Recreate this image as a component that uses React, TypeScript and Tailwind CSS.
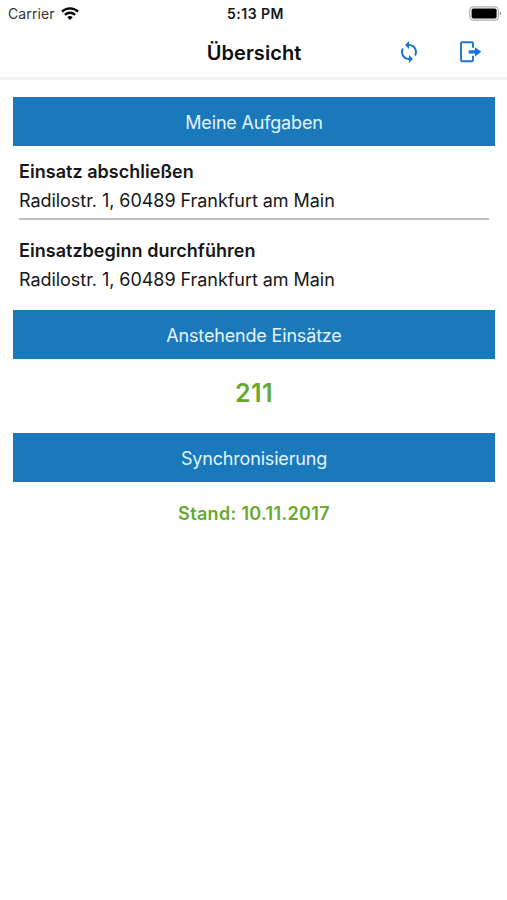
import React from 'react';
import { MdSync } from 'react-icons/md';

const tasks = [
    {
        title: "Einsatz abschließen",
        address: "Radilostr. 1, 60489 Frankfurt am Main"
    },
    {
        title: "Einsatzbeginn durchführen",
        address: "Radilostr. 1, 60489 Frankfurt am Main"
    }
];

function WifiIcon() {
    return (
        <svg width="18" height="13" viewBox="0 0 18 13" fill="none" stroke="#050505" strokeWidth="2.4">
            <path d="M1 4.7a11.4 11.4 0 0 1 16 0" />
            <path d="M3.9 7.9a7.3 7.3 0 0 1 10.2 0" />
            <path d="M9 12.9 6.3 10.2a3.9 3.9 0 0 1 5.4 0z" fill="#050505" stroke="none" />
        </svg>
    );
}

function BatteryIcon() {
    return (
        <svg width="33" height="15" viewBox="0 0 33 15">
            <rect x="0.8" y="0.8" width="28.6" height="13.4" rx="3.6" fill="#fff" stroke="#b0b0b0" strokeWidth="1.2" />
            <rect x="2.6" y="2.6" width="25" height="9.8" rx="1.6" fill="#000" />
            <path d="M30.9 5.4a2.3 2.3 0 0 1 0 4.2z" fill="#999" />
        </svg>
    );
}

function LogoutIcon() {
    return (
        <svg width="22" height="22" viewBox="0 0 22 22" fill="none">
            <path d="M13 6.8V2.6q0-1.4-1.4-1.4H2.4Q1 1.2 1 2.6v16.3q0 1.4 1.4 1.4h9.2q1.4 0 1.4-1.4v-4.2" stroke="#1c74d2" strokeWidth="1.9" />
            <path d="M8.7 9.2h6.2V6.2l6.5 4.6-6.5 4.6v-3H8.7z" fill="#1773e2" />
        </svg>
    );
}

function SectionBar({ children }: { children: React.ReactNode }) {
    return (
        <h2 className="h-[49px] pt-0.5 flex items-center justify-center bg-[#1a79bb] text-[#e4f4fe] text-[18px] leading-none tracking-[-0.17px]">
            {children}
        </h2>
    );
}

export default function App() {
    return (
        <div className="min-h-screen bg-white text-[#171717] font-['Inter',sans-serif]">
            <div className="h-[26px] grid grid-cols-[1fr_auto_1fr] items-center pl-2 pr-[5px] text-[14px]">
                <div className="flex items-center gap-1.5">
                    <span className="text-[#333] tracking-[0.1px]">Carrier</span>
                    <WifiIcon />
                </div>
                <span className="text-center font-semibold tracking-[0.5px] pl-px">5:13 PM</span>
                <div className="flex justify-end">
                    <BatteryIcon />
                </div>
            </div>

            <header className="h-[54px] grid grid-cols-[1fr_auto_1fr] items-center border-b-[3px] border-[#f2f2f2]">
                <h1 className="col-start-2 pt-0.5 pl-px text-[20px] font-semibold tracking-[0.05px] text-[#0c0c0c]">Übersicht</h1>
                <div className="flex items-center justify-end gap-[39px] pr-[25px]">
                    <button>
                        <MdSync size={24} color="#1c74d2" />
                    </button>
                    <button>
                        <LogoutIcon />
                    </button>
                </div>
            </header>

            <main className="pl-[13px] pr-3 pt-[17px]">
                <SectionBar>Meine Aufgaben</SectionBar>
                <ul className="px-1.5 mb-4">
                    {tasks.map((task, i) => (
                        <li key={i} className="pt-[11px] pb-[3px] mb-[5px] last:mb-0 last:pb-0 border-b-2 border-[#c0c0c0] last:border-b-0">
                            <h3 className="text-[18px] leading-[29px] font-semibold tracking-[0.03px]">{task.title}</h3>
                            <p className="text-[18px] leading-[29px] tracking-[-0.05px]">{task.address}</p>
                        </li>
                    ))}
                </ul>

                <SectionBar>Anstehende Einsätze</SectionBar>
                <p className="h-[74px] pb-[5px] flex items-center justify-center text-[25px] font-semibold tracking-[0.5px] text-[#68a92f]">211</p>

                <SectionBar>Synchronisierung</SectionBar>
                <p className="h-[62px] flex items-center justify-center text-[18px] font-semibold tracking-[0.33px] text-[#68a92f]">Stand: 10.11.2017</p>
            </main>
        </div>
    );
}
